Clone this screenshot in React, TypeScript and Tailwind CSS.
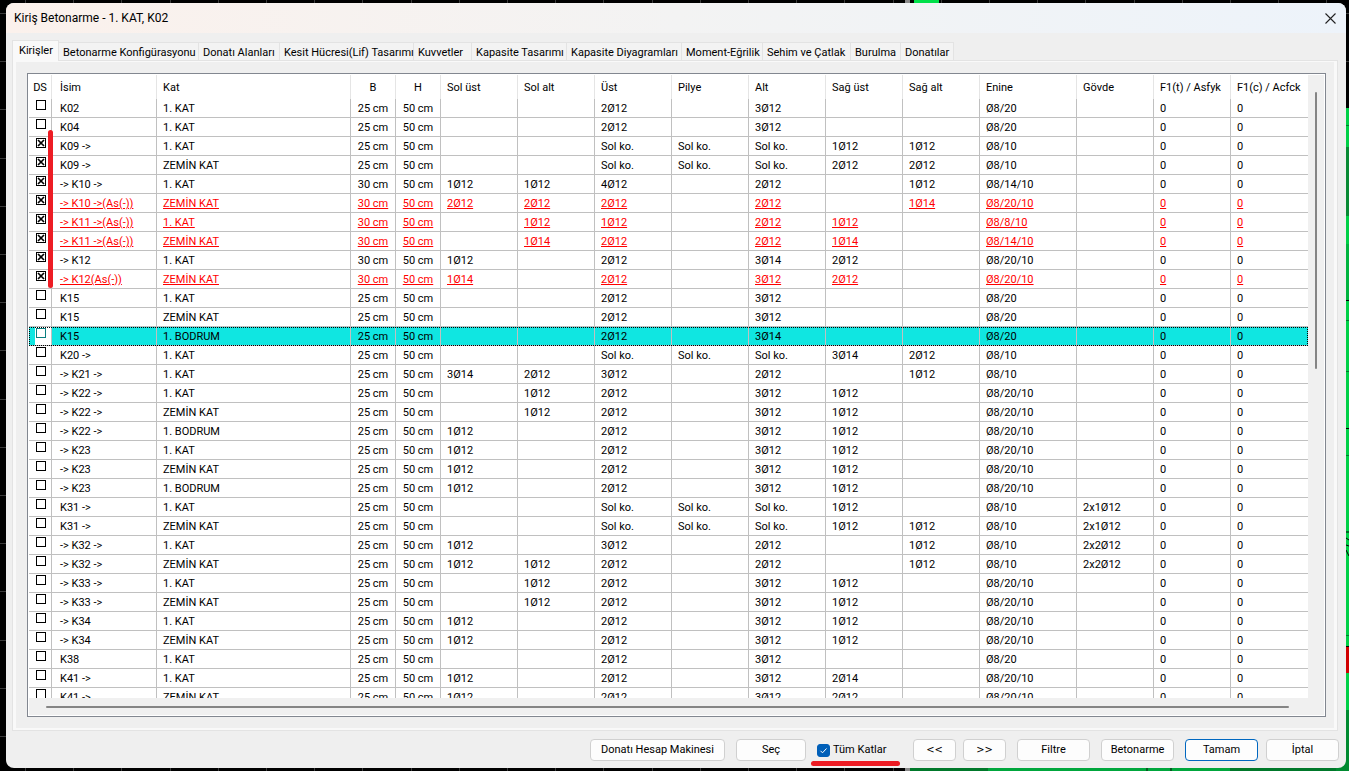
import { useState } from "react";

interface Beam {
  name: string;
  floor: string;
  b: number;
  // sol üst, sol alt, üst, pilye, alt, sağ üst, sağ alt, enine, gövde
  bars: string[];
  failed?: boolean;
  checked?: boolean;
}

const K1 = "1. KAT";
const ZK = "ZEMİN KAT";
const BD = "1. BODRUM";

const beams: Beam[] = [
  { name: "K02", floor: K1, b: 25, bars: ["", "", "2Ø12", "", "3Ø12", "", "", "Ø8/20", ""] },
  { name: "K04", floor: K1, b: 25, bars: ["", "", "2Ø12", "", "3Ø12", "", "", "Ø8/20", ""] },
  { name: "K09 ->", floor: K1, b: 25, checked: true, bars: ["", "", "Sol ko.", "Sol ko.", "Sol ko.", "1Ø12", "1Ø12", "Ø8/10", ""] },
  { name: "K09 ->", floor: ZK, b: 25, checked: true, bars: ["", "", "Sol ko.", "Sol ko.", "Sol ko.", "2Ø12", "2Ø12", "Ø8/10", ""] },
  { name: "-> K10 ->", floor: K1, b: 30, checked: true, bars: ["1Ø12", "1Ø12", "4Ø12", "", "2Ø12", "", "1Ø12", "Ø8/14/10", ""] },
  { name: "-> K10 ->(As(-))", floor: ZK, b: 30, checked: true, failed: true, bars: ["2Ø12", "2Ø12", "2Ø12", "", "2Ø12", "", "1Ø14", "Ø8/20/10", ""] },
  { name: "-> K11 ->(As(-))", floor: K1, b: 30, checked: true, failed: true, bars: ["", "1Ø12", "1Ø12", "", "2Ø12", "1Ø12", "", "Ø8/8/10", ""] },
  { name: "-> K11 ->(As(-))", floor: ZK, b: 30, checked: true, failed: true, bars: ["", "1Ø14", "2Ø12", "", "2Ø12", "1Ø14", "", "Ø8/14/10", ""] },
  { name: "-> K12", floor: K1, b: 30, checked: true, bars: ["1Ø12", "", "2Ø12", "", "3Ø14", "2Ø12", "", "Ø8/20/10", ""] },
  { name: "-> K12(As(-))", floor: ZK, b: 30, checked: true, failed: true, bars: ["1Ø14", "", "2Ø12", "", "3Ø12", "2Ø12", "", "Ø8/20/10", ""] },
  { name: "K15", floor: K1, b: 25, bars: ["", "", "2Ø12", "", "3Ø12", "", "", "Ø8/20", ""] },
  { name: "K15", floor: ZK, b: 25, bars: ["", "", "2Ø12", "", "3Ø12", "", "", "Ø8/20", ""] },
  { name: "K15", floor: BD, b: 25, bars: ["", "", "2Ø12", "", "3Ø14", "", "", "Ø8/20", ""] },
  { name: "K20 ->", floor: K1, b: 25, bars: ["", "", "Sol ko.", "Sol ko.", "Sol ko.", "3Ø14", "2Ø12", "Ø8/10", ""] },
  { name: "-> K21 ->", floor: K1, b: 25, bars: ["3Ø14", "2Ø12", "3Ø12", "", "2Ø12", "", "1Ø12", "Ø8/10", ""] },
  { name: "-> K22 ->", floor: K1, b: 25, bars: ["", "1Ø12", "2Ø12", "", "3Ø12", "1Ø12", "", "Ø8/20/10", ""] },
  { name: "-> K22 ->", floor: ZK, b: 25, bars: ["", "1Ø12", "2Ø12", "", "3Ø12", "1Ø12", "", "Ø8/20/10", ""] },
  { name: "-> K22 ->", floor: BD, b: 25, bars: ["1Ø12", "", "2Ø12", "", "3Ø12", "1Ø12", "", "Ø8/20/10", ""] },
  { name: "-> K23", floor: K1, b: 25, bars: ["1Ø12", "", "2Ø12", "", "3Ø12", "1Ø12", "", "Ø8/20/10", ""] },
  { name: "-> K23", floor: ZK, b: 25, bars: ["1Ø12", "", "2Ø12", "", "3Ø12", "1Ø12", "", "Ø8/20/10", ""] },
  { name: "-> K23", floor: BD, b: 25, bars: ["1Ø12", "", "2Ø12", "", "3Ø12", "1Ø12", "", "Ø8/20/10", ""] },
  { name: "K31 ->", floor: K1, b: 25, bars: ["", "", "Sol ko.", "Sol ko.", "Sol ko.", "1Ø12", "", "Ø8/10", "2x1Ø12"] },
  { name: "K31 ->", floor: ZK, b: 25, bars: ["", "", "Sol ko.", "Sol ko.", "Sol ko.", "1Ø12", "1Ø12", "Ø8/10", "2x1Ø12"] },
  { name: "-> K32 ->", floor: K1, b: 25, bars: ["1Ø12", "", "3Ø12", "", "2Ø12", "", "1Ø12", "Ø8/10", "2x2Ø12"] },
  { name: "-> K32 ->", floor: ZK, b: 25, bars: ["1Ø12", "1Ø12", "2Ø12", "", "2Ø12", "", "1Ø12", "Ø8/10", "2x2Ø12"] },
  { name: "-> K33 ->", floor: K1, b: 25, bars: ["", "1Ø12", "2Ø12", "", "3Ø12", "1Ø12", "", "Ø8/20/10", ""] },
  { name: "-> K33 ->", floor: ZK, b: 25, bars: ["", "1Ø12", "2Ø12", "", "3Ø12", "1Ø12", "", "Ø8/20/10", ""] },
  { name: "-> K34", floor: K1, b: 25, bars: ["1Ø12", "", "2Ø12", "", "3Ø12", "1Ø12", "", "Ø8/20/10", ""] },
  { name: "-> K34", floor: ZK, b: 25, bars: ["1Ø12", "", "2Ø12", "", "3Ø12", "1Ø12", "", "Ø8/20/10", ""] },
  { name: "K38", floor: K1, b: 25, bars: ["", "", "2Ø12", "", "3Ø12", "", "", "Ø8/20", ""] },
  { name: "K41 ->", floor: K1, b: 25, bars: ["1Ø12", "", "2Ø12", "", "3Ø12", "2Ø14", "", "Ø8/20/10", ""] },
  { name: "K41 ->", floor: ZK, b: 25, bars: ["1Ø12", "", "2Ø12", "", "3Ø12", "2Ø12", "", "Ø8/20/10", ""] },
];

const columns = [
  { title: "DS", width: "w-[23px]", align: "text-center" },
  { title: "İsim", width: "w-[105px]", align: "pl-2 text-left" },
  { title: "Kat", width: "", align: "pl-1.5 text-left" },
  { title: "B", width: "w-[45px]", align: "text-center" },
  { title: "H", width: "w-[45px]", align: "text-center" },
  { title: "Sol üst", width: "w-[77px]", align: "pl-1.5 text-left" },
  { title: "Sol alt", width: "w-[77px]", align: "pl-1.5 text-left" },
  { title: "Üst", width: "w-[77px]", align: "pl-1.5 text-left" },
  { title: "Pilye", width: "w-[77px]", align: "pl-1.5 text-left" },
  { title: "Alt", width: "w-[77px]", align: "pl-1.5 text-left" },
  { title: "Sağ üst", width: "w-[77px]", align: "pl-1.5 text-left" },
  { title: "Sağ alt", width: "w-[77px]", align: "pl-1.5 text-left" },
  { title: "Enine", width: "w-[97px]", align: "pl-1.5 text-left" },
  { title: "Gövde", width: "w-[77px]", align: "pl-1.5 text-left" },
  { title: "F1(t) / Asfyk", width: "w-[77px]", align: "pl-1.5 text-left" },
  { title: "F1(c) / Acfck", width: "w-[77px]", align: "pl-1.5 text-left" },
];

const tabs = [
  { title: "Kirişler", width: "w-[47px]" },
  { title: "Betonarme Konfigürasyonu", width: "w-[140px]" },
  { title: "Donatı Alanları", width: "w-[81px]" },
  { title: "Kesit Hücresi(Lif) Tasarımı", width: "w-[134px]" },
  { title: "Kuvvetler", width: "w-[58px]" },
  { title: "Kapasite Tasarımı", width: "w-[95px]" },
  { title: "Kapasite Diyagramları", width: "w-[115px]" },
  { title: "Moment-Eğrilik", width: "w-[81px]" },
  { title: "Sehim ve Çatlak", width: "w-[88px]" },
  { title: "Burulma", width: "w-[50px]" },
  { title: "Donatılar", width: "w-[53px]" },
];

const gridLines = Array.from({ length: 29 }, (_, i) => i * 48.2);

function Drawing() {
  return (
    <svg className="absolute inset-0 h-full w-full" viewBox="0 0 1349 771" preserveAspectRatio="none" aria-hidden="true">
      <rect width="1349" height="771" fill="#000" />
      {gridLines.map((p) => (
        <g key={p} fill="#3a3a3a">
          <rect x={Math.round(25 + p)} width="1" height="771" />
          <rect y={Math.round(13 + p)} width="1349" height="1" />
        </g>
      ))}
      <rect x="905" width="5" height="771" fill="#8a8a8a" />
      <rect x="914" width="25" height="3" fill="#00e04a" />
      <rect x="910" y="766" width="439" height="5" fill="#00782a" />
      <rect x="988" y="766" width="242" height="5" fill="#00a63c" />
      <rect x="1146" y="766" width="2" height="5" fill="#045c22" />
      <rect x="1170" y="766" width="2" height="5" fill="#045c22" />
      <rect x="1336" y="108" width="13" height="660" fill="#00d046" />
      <rect x="1336" y="125" width="13" height="1" fill="#007a2a" />
      <rect x="1336" y="147" width="13" height="69" fill="#088a34" />
      <rect x="1336" y="244" width="13" height="56" fill="#00b43e" />
      <rect x="1336" y="300" width="13" height="1" fill="#000" />
      <rect x="1336" y="320" width="13" height="1" fill="#007a2a" />
      <rect x="1336" y="371" width="13" height="1" fill="#007a2a" />
      <rect x="1336" y="428" width="13" height="1" fill="#000" />
      <rect x="1336" y="455" width="13" height="1" fill="#007a2a" />
      <path d="M1346 532h3M1346 538l3 2M1346 545l3 1M1346 550l3 6" stroke="#000" />
      <rect x="1336" y="635" width="13" height="1" fill="#007a2a" />
      <rect x="1336" y="646" width="13" height="27" fill="#d00000" />
      <rect x="1336" y="646" width="13" height="1" fill="#000" />
      <rect x="1336" y="710" width="13" height="61" fill="#008a30" />
    </svg>
  );
}

function DsCheckbox({ label, defaultChecked, selected }: { label: string; defaultChecked?: boolean; selected: boolean }) {
  return (
    <span className="ml-[7px] mt-px grid size-2.5">
      <input
        type="checkbox"
        aria-label={label}
        defaultChecked={defaultChecked}
        className={`peer col-start-1 row-start-1 size-2.5 appearance-none border bg-white ${selected ? "border-[#0a7f80]" : "border-black"}`}
      />
      <svg viewBox="0 0 10 10" className="pointer-events-none invisible col-start-1 row-start-1 size-2.5 peer-checked:visible">
        <path d="M2 2l6 6M8 2l-6 6" stroke="#000" strokeWidth="1.7" />
      </svg>
    </span>
  );
}

function PushButton({ title, width, primary }: { title: string; width: string; primary?: boolean }) {
  return (
    <button
      type="button"
      className={`h-[22px] shrink-0 whitespace-nowrap rounded border bg-[#fdfdfd] leading-5 ${width} ${primary ? "border-[#0067c0]" : "border-[#d0d0d0]"}`}
    >
      {title}
    </button>
  );
}

function StepButton({ title, label }: { title: string; label: string }) {
  return (
    <button
      type="button"
      aria-label={label}
      className="h-[22px] w-[43px] shrink-0 rounded border border-[#d0d0d0] bg-[#fdfdfd] font-['DejaVu_Sans_Condensed','DejaVu_Sans',sans-serif] leading-5"
    >
      {title}
    </button>
  );
}

export default function App() {
  const [activeTab, setActiveTab] = useState(0);
  const [selectedRow, setSelectedRow] = useState(12);

  return (
    <div className="relative h-screen overflow-hidden py-[3px] pl-1.5 pr-[3px] font-['Roboto','Noto_Sans',sans-serif] text-[11px] text-black">
      <Drawing />
      <div className="relative flex h-full flex-col overflow-hidden rounded-lg bg-[#efefef]">
        <header className="flex h-[30px] shrink-0 items-center justify-between bg-linear-to-r from-[#fbf1ec] via-[#f3f3f3] to-[#edf3fa] pl-2 pr-2.5">
          <h1 className="text-xs">Kiriş Betonarme - 1. KAT, K02</h1>
          <button type="button" aria-label="Kapat">
            <svg viewBox="0 0 11 11" className="size-[11px]">
              <path d="M0.5 0.5l10 10M10.5 0.5l-10 10" stroke="#222" strokeWidth="1.1" />
            </svg>
          </button>
        </header>

        <nav role="tablist" className="ml-1.5 mt-[7px] flex h-5 shrink-0 items-end">
          {tabs.map((tab, i) => (
            <button
              key={tab.title}
              type="button"
              role="tab"
              aria-selected={i === activeTab}
              onClick={() => setActiveTab(i)}
              className={`shrink-0 whitespace-nowrap border-r border-t border-[#e3e3e3] text-left ${tab.width} ${
                i === activeTab ? "relative z-10 -mb-px h-[21px] border-l bg-[#f9f9f9] pl-1.5 leading-[18px]" : "h-[18px] bg-[#f3f3f3] pl-1 pt-0.5 leading-4"
              }`}
            >
              {tab.title}
            </button>
          ))}
        </nav>

        <main className="ml-1.5 mr-2 flex min-h-0 flex-1 flex-col border border-[#e3e3e3] bg-[#f9f9f9] px-[3px] pb-0.5 pt-px">
          <div className="flex min-h-0 flex-1 flex-col bg-[#efefef] pb-[11px] pl-[11px] pr-2 pt-[11px]">
            <div className="relative flex min-h-0 flex-1 flex-col border border-[#828790] bg-white p-px">
              <div className="flex min-h-0 flex-1">
                <div className="min-w-0 flex-1 overflow-hidden">
                  <table className="w-full table-fixed border-separate border-spacing-0">
                    <thead>
                      <tr className="h-6">
                        {columns.map((col) => (
                          <th
                            key={col.title}
                            className={`whitespace-nowrap border-r border-[#e5e5e5] pt-0.5 font-normal leading-4 last:border-r-0 ${col.width} ${col.align}`}
                          >
                            {col.title}
                          </th>
                        ))}
                      </tr>
                    </thead>
                    <tbody>
                      {beams.map((beam, i) => {
                        const selected = i === selectedRow;
                        const cells = [beam.name, beam.floor, `${beam.b} cm`, "50 cm", ...beam.bars, "0", "0"];
                        return (
                          <tr
                            key={i}
                            onClick={() => setSelectedRow(i)}
                            className={`h-[19px] ${selected ? "bg-[#10e6e1] outline-1 -outline-offset-1 outline-dotted outline-black" : ""} ${
                              beam.failed ? "text-[#f00] underline underline-offset-1" : ""
                            }`}
                          >
                            <td
                              className={`border-b border-r border-[#c0c0c0] align-top ${
                                selected ? "bg-linear-to-r from-[#10e6e1] from-[6px] to-white to-[6px]" : ""
                              }`}
                            >
                              <DsCheckbox label={`${beam.name} ${beam.floor}`} defaultChecked={beam.checked} selected={selected} />
                            </td>
                            {cells.map((cell, c) => (
                              <td
                                key={c}
                                className={`whitespace-nowrap border-b border-r border-[#c0c0c0] pt-0.5 leading-4 last:border-r-0 ${columns[c + 1].align}`}
                              >
                                {cell}
                              </td>
                            ))}
                          </tr>
                        );
                      })}
                    </tbody>
                  </table>
                </div>
                <div className="flex w-4 shrink-0 justify-center bg-[#f0f0f0] pt-[17px]">
                  <div className="h-[277px] w-0.5 rounded-full bg-[#858585]" />
                </div>
              </div>
              <div className="flex h-[17px] shrink-0 items-center bg-[#f0f0f0] pl-[17px] pr-[35px]">
                <div className="h-0.5 flex-1 rounded-full bg-[#858585]" />
              </div>
              <div className="absolute left-5 top-14 h-[158px] w-[5px] rounded-sm bg-[#ed1c24]" />
            </div>
          </div>
        </main>

        <footer className="flex shrink-0 justify-end gap-[11px] pb-[7px] pr-[7px] pt-2">
          <PushButton title="Donatı Hesap Makinesi" width="w-[135px]" />
          <PushButton title="Seç" width="w-[70px]" />
          <label className="relative flex w-[85px] items-center gap-[3px]">
            <input type="checkbox" defaultChecked className="peer size-[13px] appearance-none rounded-[3px] border border-[#868686] bg-white checked:border-[#005fb8] checked:bg-[#005fb8]" />
            <svg viewBox="0 0 13 13" className="pointer-events-none invisible absolute left-0 size-[13px] peer-checked:visible">
              <path d="M3.5 6.8l2 2 4-4.3" fill="none" stroke="#fff" strokeWidth="1" />
            </svg>
            Tüm Katlar
            <span className="absolute -left-1.5 top-[22px] h-[5px] w-[89px] rounded-sm bg-[#ed1c24]" />
          </label>
          <div className="flex gap-[7px]">
            <StepButton title="<<" label="Önceki" />
            <StepButton title=">>" label="Sonraki" />
          </div>
          <PushButton title="Filtre" width="w-[73px]" />
          <PushButton title="Betonarme" width="w-[73px]" />
          <div className="flex gap-2">
            <PushButton title="Tamam" width="w-[73px]" primary />
            <PushButton title="İptal" width="w-[73px]" />
          </div>
        </footer>
      </div>
    </div>
  );
}
